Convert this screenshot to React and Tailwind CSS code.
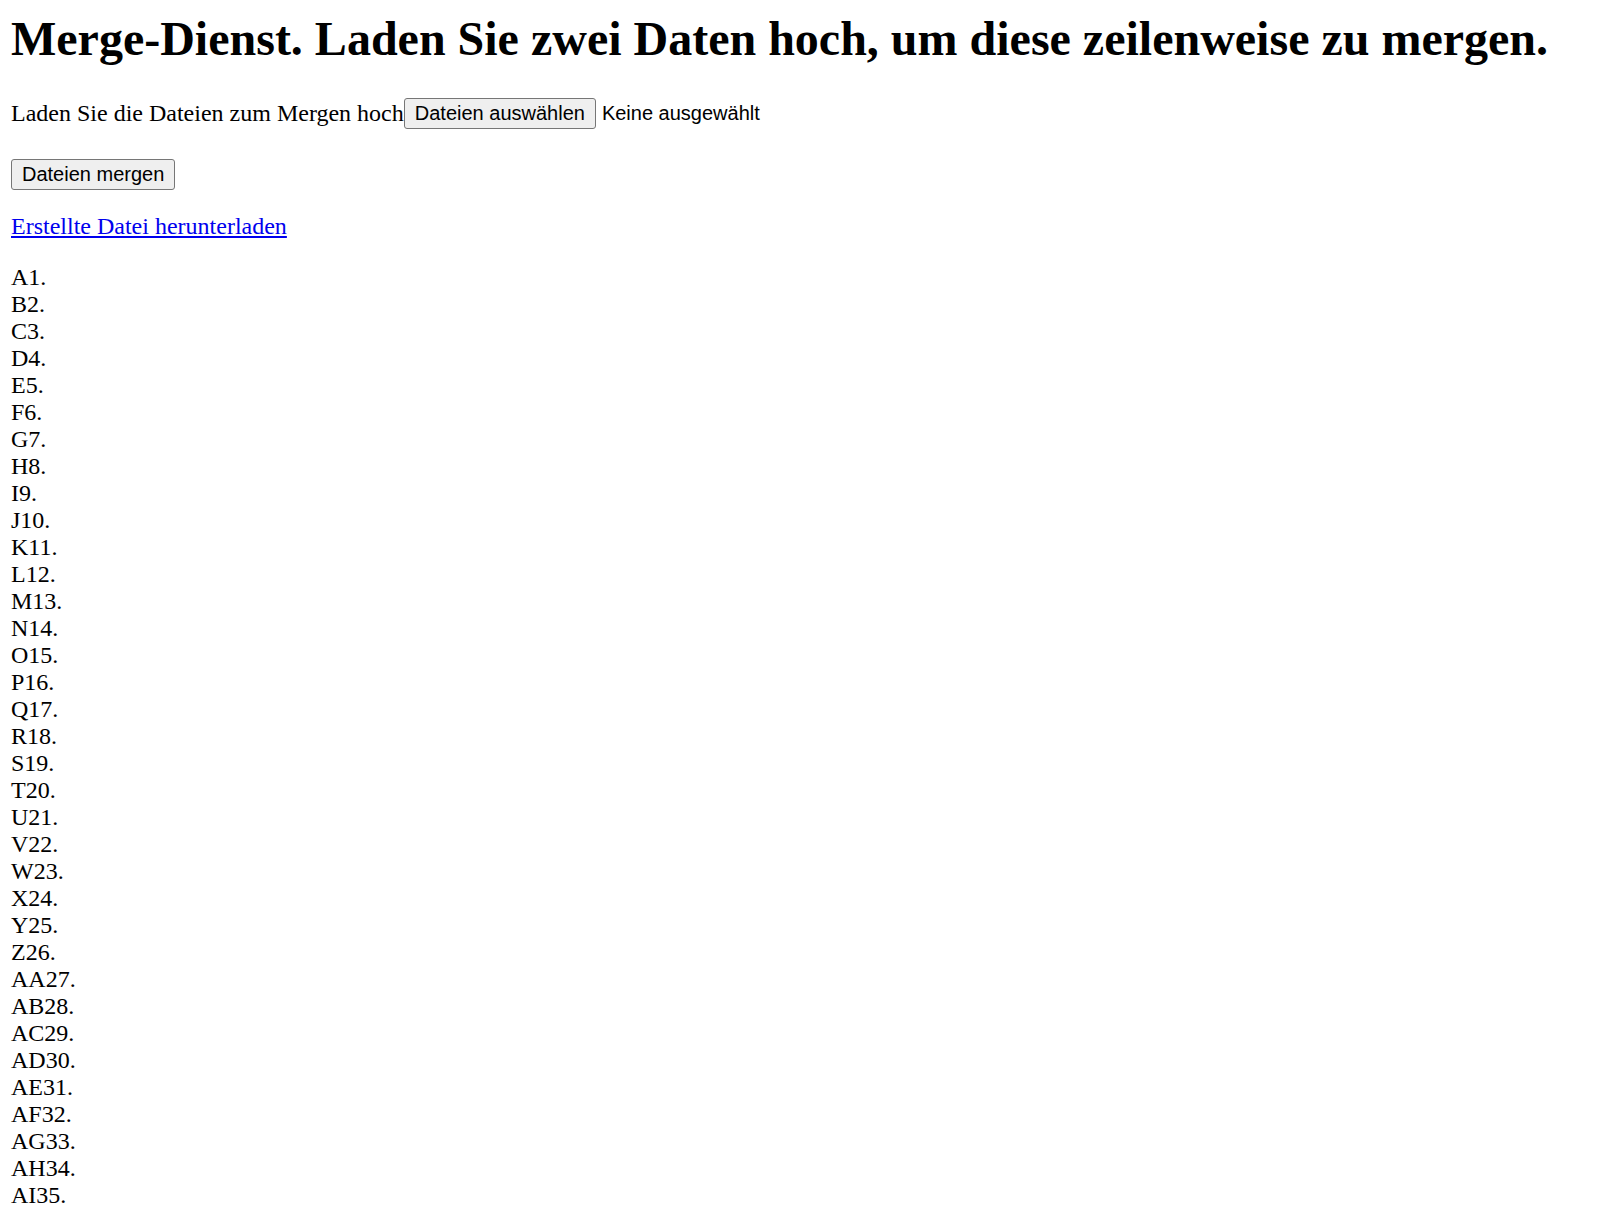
const colName = (n) => {
  let s = ''
  let x = n
  while (x > 0) {
    const r = (x - 1) % 26
    s = String.fromCharCode(65 + r) + s
    x = Math.floor((x - 1) / 26)
  }
  return s
}

const rows = Array.from({ length: 35 }, (_, i) => `${colName(i + 1)}${i + 1}.`)

const btn =
  "h-[31px] rounded-[3px] border border-[#767676] bg-[#efefef] px-[10px] font-['Liberation_Sans',Arial,sans-serif] text-[20px] leading-[23px] text-black"

export default function App() {
  return (
    <div className="min-h-screen bg-white py-[12px] pl-[11px] pr-[12px] font-['Liberation_Serif','Times_New_Roman',serif] text-[24px] leading-[27px] text-black">
      <h1 className="mb-[32px] whitespace-nowrap text-[48px] font-bold leading-[53px]">
        Merge-Dienst. Laden Sie zwei Daten hoch, um diese zeilenweise zu mergen.
      </h1>
      <div className="flex h-[33px] items-center">
        <span>Laden Sie die Dateien zum Mergen hoch</span>
        <button className={btn}>Dateien auswählen</button>
        <span className="ml-[6px] font-['Liberation_Sans',Arial,sans-serif] text-[20px]">Keine ausgewählt</span>
      </div>
      <div className="mt-[29px]">
        <button className={btn}>Dateien mergen</button>
      </div>
      <div className="mt-[23px]">
        <a href="#" className="text-[#0000ee] underline">
          Erstellte Datei herunterladen
        </a>
      </div>
      <div className="mt-[24px]">
        {rows.map((r) => (
          <div key={r}>{r}</div>
        ))}
      </div>
    </div>
  )
}
